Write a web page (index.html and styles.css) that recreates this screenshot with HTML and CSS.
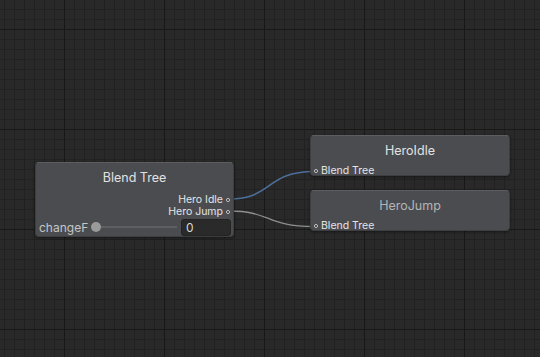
FILE: index.html
```html
<!DOCTYPE html>
<html lang="en">
<head>
    <meta charset="UTF-8">
    <meta name="viewport" content="width=device-width, initial-scale=1.0">
    <title>Animator - Blend Tree</title>
    <link rel="stylesheet" href="styles.css">
</head>
<body>
    <div class="canvas">
        <!-- Connections between nodes -->
        <svg class="wires" width="540" height="357" viewBox="0 0 540 357">
            <path d="M230 199 C 272 199, 266 171.5, 314 171.5" stroke="#4d6e98" stroke-width="1.6" fill="none"/>
            <path d="M230 211 C 270 211, 266 226.5, 314 226.5" stroke="#8e8e8e" stroke-width="1.4" fill="none"/>
        </svg>

        <div class="node blend-node">
            <div class="node-title">Blend Tree</div>
            <div class="outputs">
                <div class="port out">Hero Idle <span class="dot"></span></div>
                <div class="port out">Hero Jump <span class="dot"></span></div>
            </div>
            <div class="param-row">
                <span class="param-name">changeF</span>
                <div class="slider">
                    <span class="knob"></span>
                    <span class="track"></span>
                </div>
                <div class="number-field">0</div>
            </div>
        </div>

        <div class="node clip-node idle-node">
            <div class="node-title">HeroIdle</div>
            <div class="port in"><span class="dot"></span> Blend Tree</div>
        </div>

        <div class="node clip-node jump-node">
            <div class="node-title dim">HeroJump</div>
            <div class="port in"><span class="dot"></span> Blend Tree</div>
        </div>
    </div>
</body>
</html>
```

FILE: styles.css
```css
body {
    margin: 0;
    background-color: #292929;
    font-family: Inter, "Noto Sans", sans-serif;
    overflow: hidden;
}

.canvas {
    position: relative;
    width: 540px;
    height: 357px;
    background-color: #292929;
    background-image:
        linear-gradient(to right, #181818 1px, transparent 1px),
        linear-gradient(to bottom, #181818 1px, transparent 1px),
        linear-gradient(to right, #212121 1px, transparent 1px),
        linear-gradient(to bottom, #212121 1px, transparent 1px);
    background-size: 100px 100px, 100px 100px, 10px 10px, 10px 10px;
    background-position: 64px 0, 0 29px, 4px 0, 0 9px;
}

.wires {
    position: absolute;
    left: 0;
    top: 0;
}

.node {
    position: absolute;
    box-sizing: border-box;
    background-color: #4a4c50;
    border: 1px solid #3c3e41;
    border-top-color: #5c5e62;
    border-radius: 4px;
    box-shadow: 0 1px 3px rgba(0, 0, 0, 0.45);
    color: #dcdcdc;
    display: flex;
    flex-direction: column;
}

.blend-node {
    left: 35px;
    top: 162px;
    width: 199px;
    height: 75px;
}

.clip-node {
    left: 310px;
    width: 200px;
    height: 41px;
}

.idle-node {
    top: 135px;
}

.jump-node {
    top: 190px;
}

.node-title {
    height: 30px;
    line-height: 29px;
    text-align: center;
    font-size: 12.5px;
    color: #e2e2e2;
}

.node-title.dim {
    color: #b4b4b4;
}

.outputs {
    display: flex;
    flex-direction: column;
    margin-top: 1px;
}

.port {
    height: 12px;
    line-height: 12px;
    font-size: 10.5px;
    color: #e4e4e4;
    display: flex;
    align-items: center;
    gap: 3px;
}

.port.out {
    justify-content: flex-end;
    padding-right: 3px;
}

.port.in {
    padding-left: 3px;
}

.dot {
    width: 2px;
    height: 2px;
    border: 1px solid #d0d0d0;
    border-radius: 50%;
    background-color: #1e1e1e;
}

.param-row {
    display: flex;
    align-items: center;
    height: 18px;
    padding: 0 2px 0 3px;
}

.param-name {
    font-size: 12px;
    color: #c6c6c6;
    width: 52px;
}

.slider {
    display: flex;
    align-items: center;
    width: 90px;
}

.knob {
    width: 10px;
    height: 10px;
    border-radius: 50%;
    background-color: #9a9a9a;
}

.track {
    flex: 1;
    height: 2px;
    margin-right: 4px;
    background-color: #5e5f61;
}

.number-field {
    box-sizing: border-box;
    width: 50px;
    height: 17px;
    line-height: 15px;
    padding-left: 4px;
    font-size: 12px;
    color: #d8d8d8;
    background-color: #2a2a2a;
    border: 1px solid #232323;
    border-radius: 3px;
}
```
